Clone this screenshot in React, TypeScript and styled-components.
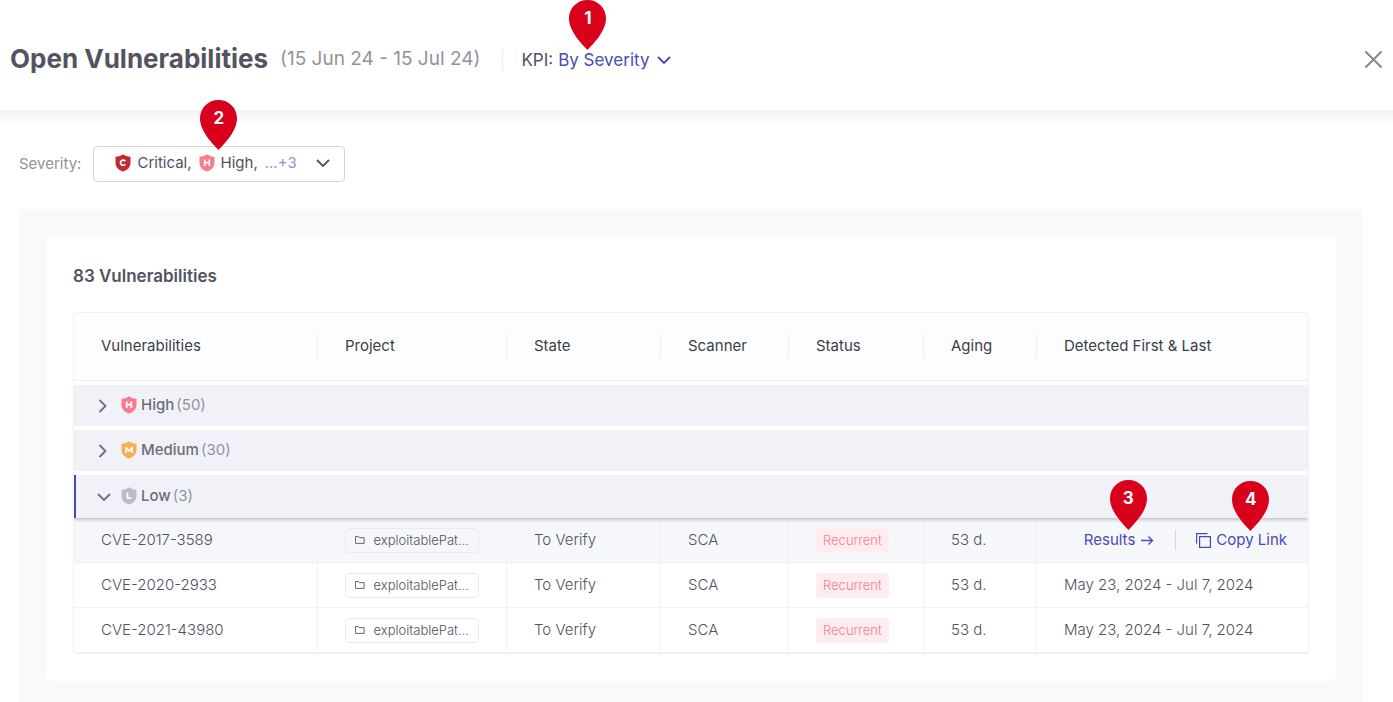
import React from "react";
import styled, { createGlobalStyle, css } from "styled-components";

const GlobalStyle = createGlobalStyle`
  *, *::before, *::after { box-sizing: border-box; }
  body {
    margin: 0;
    background: #fff;
    color: #50525f;
    font-family: Inter, "Liberation Sans", sans-serif;
    font-size: 15px;
    line-height: 20px;
  }
  button, select { font: inherit; color: inherit; cursor: pointer; }
`;

const Header = styled.header`
  display: flex;
  align-items: center;
  height: 110px;
  padding: 8px 10px 0;
`;

const HeaderShade = styled.div`
  height: 16px;
  background: linear-gradient(#f2f2f2, #fafafa 60%, #fff);
`;

const Title = styled.h1`
  margin: 0;
  font-size: 26px;
  line-height: 36px;
  font-weight: 700;
  color: #535460;
`;

const Period = styled.span`
  margin-left: 12px;
  font-size: 19px;
  line-height: 24px;
  color: #92939b;
`;

const Kpi = styled.div`
  position: relative;
  display: flex;
  align-items: center;
  gap: 5px;
  margin: 2px 0 0 22px;
  padding-left: 18px;
  border-left: 1px solid #ededee;
  font-size: 17px;
  line-height: 22px;
`;

const KpiSelect = styled.select`
  appearance: none;
  margin: 0;
  padding: 0 22px 0 0;
  border: 0;
  background: none;
  color: #484bb9;
`;

const KpiChevron = styled.span`
  display: flex;
  margin-left: -20px;
  pointer-events: none;
  color: #484bb9;
`;

const CloseButton = styled.button`
  display: flex;
  margin-left: auto;
  padding: 0;
  border: 0;
  background: none;
  color: #85868e;
`;

const FilterBar = styled.div`
  display: flex;
  align-items: center;
  gap: 12px;
  padding: 20px 19px 27px;
`;

const FilterLabel = styled.label`
  color: #92939b;
`;

const FilterAnchor = styled.div`
  position: relative;
`;

const SeverityPicker = styled.button`
  display: flex;
  align-items: center;
  width: 252px;
  height: 36px;
  padding: 0 14px 2px 21px;
  border: 1px solid #d6d6d9;
  border-radius: 4px;
  background: #fff;
  color: #50525f;
`;

const PickedItem = styled.span`
  display: flex;
  align-items: center;
  gap: 6px;
  margin-right: 7px;
`;

const MoreCount = styled.span`
  color: #9294d9;
`;

const PickerChevron = styled.span`
  display: flex;
  margin-left: auto;
`;

const Panel = styled.main`
  margin: 0 30px 0 19px;
  padding: 27px 27px 21px;
  border-radius: 4px 4px 0 0;
  background: #f9f9f9;
`;

const Card = styled.section`
  padding: 27px;
  border-radius: 5px;
  background: #fff;
`;

const CardTitle = styled.h2`
  margin: 0 0 23px;
  font-size: 17px;
  line-height: 26px;
  font-weight: 600;
  color: #535460;
`;

const Table = styled.table`
  width: 100%;
  table-layout: fixed;
  border-collapse: separate;
  border-spacing: 0;
  border: 1px solid #f0f1f3;
  border-bottom-color: #ededee;
  border-radius: 3px;
`;

const Col = styled.col<{ $w: number }>`
  width: ${(p) => p.$w}px;
`;

const HeadCell = styled.th`
  height: 68px;
  padding: 0 0 2px;
  border-bottom: 1px solid #eeeff1;
  background: #fcfdff;
  text-align: left;
  font-weight: 400;
  color: #3c3d45;
`;

const HeadLabel = styled.div<{ $last: boolean }>`
  padding: 2px 27px;
  border-right: ${(p) => (p.$last ? "0" : "1px solid #ededf0")};
`;

const GroupCell = styled.td`
  padding: 4px 0 0;
`;

const GroupBar = styled.button<{ $open: boolean }>`
  position: relative;
  display: flex;
  align-items: center;
  width: 100%;
  height: 41px;
  padding: 0 0 2px 23px;
  border: 0;
  background: #f1f2f8;
  color: #6d6e78;
  font-weight: 500;
  text-align: left;
  ${(p) =>
    p.$open &&
    css`
      height: 43px;
      border-left: 2px solid #484bb9;
      padding-left: 21px;
      clip-path: inset(0 0 -6px);
      box-shadow: 0 1px 4px rgba(0, 0, 0, 0.3);
    `}
`;

const GroupArrow = styled.span`
  display: flex;
  width: 24px;
  margin-top: 2px;
`;

const GroupName = styled.span`
  margin-left: 4px;
`;

const GroupCount = styled.span`
  margin-left: 2px;
  font-weight: 400;
  color: #92939b;
`;

const Row = styled.tr<{ $active?: boolean }>`
  background: ${(p) => (p.$active ? "#f6f7fb" : "#fff")};
`;

const Cell = styled.td`
  height: 45px;
  padding: 0 0 0 27px;
  border-right: 1px solid #f2f2f4;
  border-bottom: 1px solid #f2f2f4;
  font-weight: 300;
  white-space: nowrap;
  &:last-child {
    border-right: 0;
  }
`;

const ProjectTag = styled.span`
  display: flex;
  align-items: center;
  gap: 9px;
  width: 134px;
  height: 25px;
  padding: 0 9px;
  border: 1px solid #ebebed;
  border-radius: 4px;
  font-size: 13px;
  line-height: 16px;
`;

const StatusBadge = styled.span`
  display: inline-block;
  vertical-align: middle;
  padding: 4px 7px;
  border-radius: 4px;
  background: #ffecf1;
  color: #f5808f;
  font-size: 13px;
  line-height: 17px;
`;

const Actions = styled.div`
  display: flex;
  align-items: center;
  justify-content: flex-end;
  padding-right: 21px;
`;

const ActionAnchor = styled.div`
  position: relative;
  & + & {
    margin-left: 21px;
    padding-left: 20px;
    border-left: 1px solid #d5d6e8;
  }
`;

const ActionLink = styled.a`
  display: flex;
  align-items: center;
  gap: 5px;
  color: #484bb9;
  font-weight: 400;
  text-decoration: none;
`;

const PinBox = styled.div<{ $left: number; $bottom: number }>`
  position: absolute;
  left: ${(p) => p.$left}px;
  bottom: ${(p) => p.$bottom}px;
  z-index: 2;
  width: 37px;
  height: 50px;
  color: #fff;
  font-size: 17px;
  line-height: 36px;
  font-weight: 700;
  text-align: center;
  pointer-events: none;
`;

const PinShape = styled.svg`
  position: absolute;
  inset: 0;
  z-index: -1;
`;

function Pin({ n, left, bottom }: { n: number; left: number; bottom: number }) {
  return (
    <PinBox $left={left} $bottom={bottom}>
      <PinShape width="37" height="50" viewBox="0 0 37 50" aria-hidden="true">
        <path d="M18.500 50C13 44 0 31.500 0 18.500C0 7.500 8.500 0 18.500 0S37 7.500 37 18.500C37 31.500 24 44 18.500 50Z" fill="#d9001b" />
      </PinShape>
      {n}
    </PinBox>
  );
}

const shieldColors = { C: "#bf2d31", H: "#f97c8e", M: "#f9ae55", L: "#bcbdc6" };
const shieldLetters = {
  C: "M10.300 7.300A2.600 2.600 0 1 0 10.300 10.100",
  H: "M5.700 5.500V11.900M10.300 5.500V11.900M5.700 8.700H10.300",
  M: "M5 12V6.200L8 10.200L11 6.200V12",
  L: "M6.500 5.500V11.200H10.300",
};
type Severity = keyof typeof shieldColors;

function Shield({ level }: { level: Severity }) {
  return (
    <svg width="16" height="18" viewBox="0 0 16 18" aria-hidden="true">
      <path d="M8 .3C9.800 2 12.500 2.700 15.500 2.700V9C15.500 13.300 12 16.300 8 17.600C4 16.300 .5 13.300 .5 9V2.700C3.500 2.700 6.200 2 8 .3Z" fill={shieldColors[level]} />
      <path d={shieldLetters[level]} fill="none" stroke="#fff" strokeWidth="1.700" strokeLinejoin={level === "M" ? "bevel" : "miter"} />
    </svg>
  );
}

function Chevron({ right }: { right?: boolean }) {
  return (
    <svg width="14" height="14" viewBox="0 0 14 14" fill="none" stroke="currentColor" strokeWidth="1.800" aria-hidden="true">
      <path d={right ? "M2.500 1L8.500 7L2.500 13" : "M1 4L7 10L13 4"} />
    </svg>
  );
}

const columns: [string, number][] = [
  ["Vulnerabilities", 244],
  ["Project", 189],
  ["State", 154],
  ["Scanner", 128],
  ["Status", 135],
  ["Aging", 113],
  ["Detected First & Last", 271],
];

const groups: { level: Severity; name: string; count: number; open: boolean }[] = [
  { level: "H", name: "High", count: 50, open: false },
  { level: "M", name: "Medium", count: 30, open: false },
  { level: "L", name: "Low", count: 3, open: true },
];

const rows = ["CVE-2017-3589", "CVE-2020-2933", "CVE-2021-43980"];

function RowActions() {
  return (
    <Actions>
      <ActionAnchor>
        <ActionLink href="#results">
          Results
          <svg width="14" height="14" viewBox="0 0 14 14" fill="none" stroke="currentColor" strokeWidth="1.400" aria-hidden="true">
            <path d="M1 7.500H12.500M8.500 3.500L12.500 7.500L8.500 11.500" />
          </svg>
        </ActionLink>
        <Pin n={3} left={26} bottom={20} />
      </ActionAnchor>
      <ActionAnchor>
        <ActionLink href="#copy">
          <svg width="15" height="15" viewBox="0 0 15 15" fill="none" stroke="currentColor" strokeWidth="1.200" aria-hidden="true">
            <path d="M.6 10.500V.6H11.500M3.600 3.600H14.400V14.400H3.600Z" />
          </svg>
          Copy Link
        </ActionLink>
        <Pin n={4} left={56} bottom={19} />
      </ActionAnchor>
    </Actions>
  );
}

export default function App() {
  return (
    <>
      <GlobalStyle />
      <Header>
        <Title>Open Vulnerabilities</Title>
        <Period>(15 Jun 24 - 15 Jul 24)</Period>
        <Kpi>
          <label htmlFor="kpi">KPI:</label>
          <KpiSelect id="kpi">
            <option>By Severity</option>
          </KpiSelect>
          <KpiChevron>
            <Chevron />
          </KpiChevron>
          <Pin n={1} left={66} bottom={21} />
        </Kpi>
        <CloseButton aria-label="Close">
          <svg width="19" height="19" viewBox="0 0 19 19" fill="none" stroke="currentColor" strokeWidth="2" aria-hidden="true">
            <path d="M1.500 1.500L17.500 17.500M17.500 1.500L1.500 17.500" />
          </svg>
        </CloseButton>
      </Header>
      <HeaderShade />
      <FilterBar>
        <FilterLabel htmlFor="severity">Severity:</FilterLabel>
        <FilterAnchor>
          <SeverityPicker id="severity" aria-haspopup="listbox">
            <PickedItem>
              <Shield level="C" />
              Critical,
            </PickedItem>
            <PickedItem>
              <Shield level="H" />
              High,
            </PickedItem>
            <MoreCount>...+3</MoreCount>
            <PickerChevron>
              <Chevron />
            </PickerChevron>
          </SeverityPicker>
          <Pin n={2} left={107} bottom={32} />
        </FilterAnchor>
      </FilterBar>
      <Panel>
        <Card>
          <CardTitle>83 Vulnerabilities</CardTitle>
          <Table>
            <colgroup>
              {columns.map(([name, w]) => (
                <Col key={name} $w={w} />
              ))}
            </colgroup>
            <thead>
              <tr>
                {columns.map(([name], i) => (
                  <HeadCell key={name} scope="col">
                    <HeadLabel $last={i === columns.length - 1}>{name}</HeadLabel>
                  </HeadCell>
                ))}
              </tr>
            </thead>
            <tbody>
              {groups.map((g) => (
                <tr key={g.level}>
                  <GroupCell colSpan={columns.length}>
                    <GroupBar $open={g.open} aria-expanded={g.open}>
                      <GroupArrow>
                        <Chevron right={!g.open} />
                      </GroupArrow>
                      <Shield level={g.level} />
                      <GroupName>{g.name}</GroupName>
                      <GroupCount>({g.count})</GroupCount>
                    </GroupBar>
                  </GroupCell>
                </tr>
              ))}
              {rows.map((id, i) => (
                <Row key={id} $active={i === 0}>
                  <Cell>{id}</Cell>
                  <Cell>
                    <ProjectTag>
                      <svg width="13" height="12" viewBox="0 0 13 12" fill="none" stroke="currentColor" strokeWidth="1.200" aria-hidden="true">
                        <path d="M.6 1.200H4.800L6 2.800H12.400V10.600H.6Z" />
                      </svg>
                      exploitablePat...
                    </ProjectTag>
                  </Cell>
                  <Cell>To Verify</Cell>
                  <Cell>SCA</Cell>
                  <Cell>
                    <StatusBadge>Recurrent</StatusBadge>
                  </Cell>
                  <Cell>53 d.</Cell>
                  <Cell>{i === 0 ? <RowActions /> : "May 23, 2024 - Jul 7, 2024"}</Cell>
                </Row>
              ))}
            </tbody>
          </Table>
        </Card>
      </Panel>
    </>
  );
}
